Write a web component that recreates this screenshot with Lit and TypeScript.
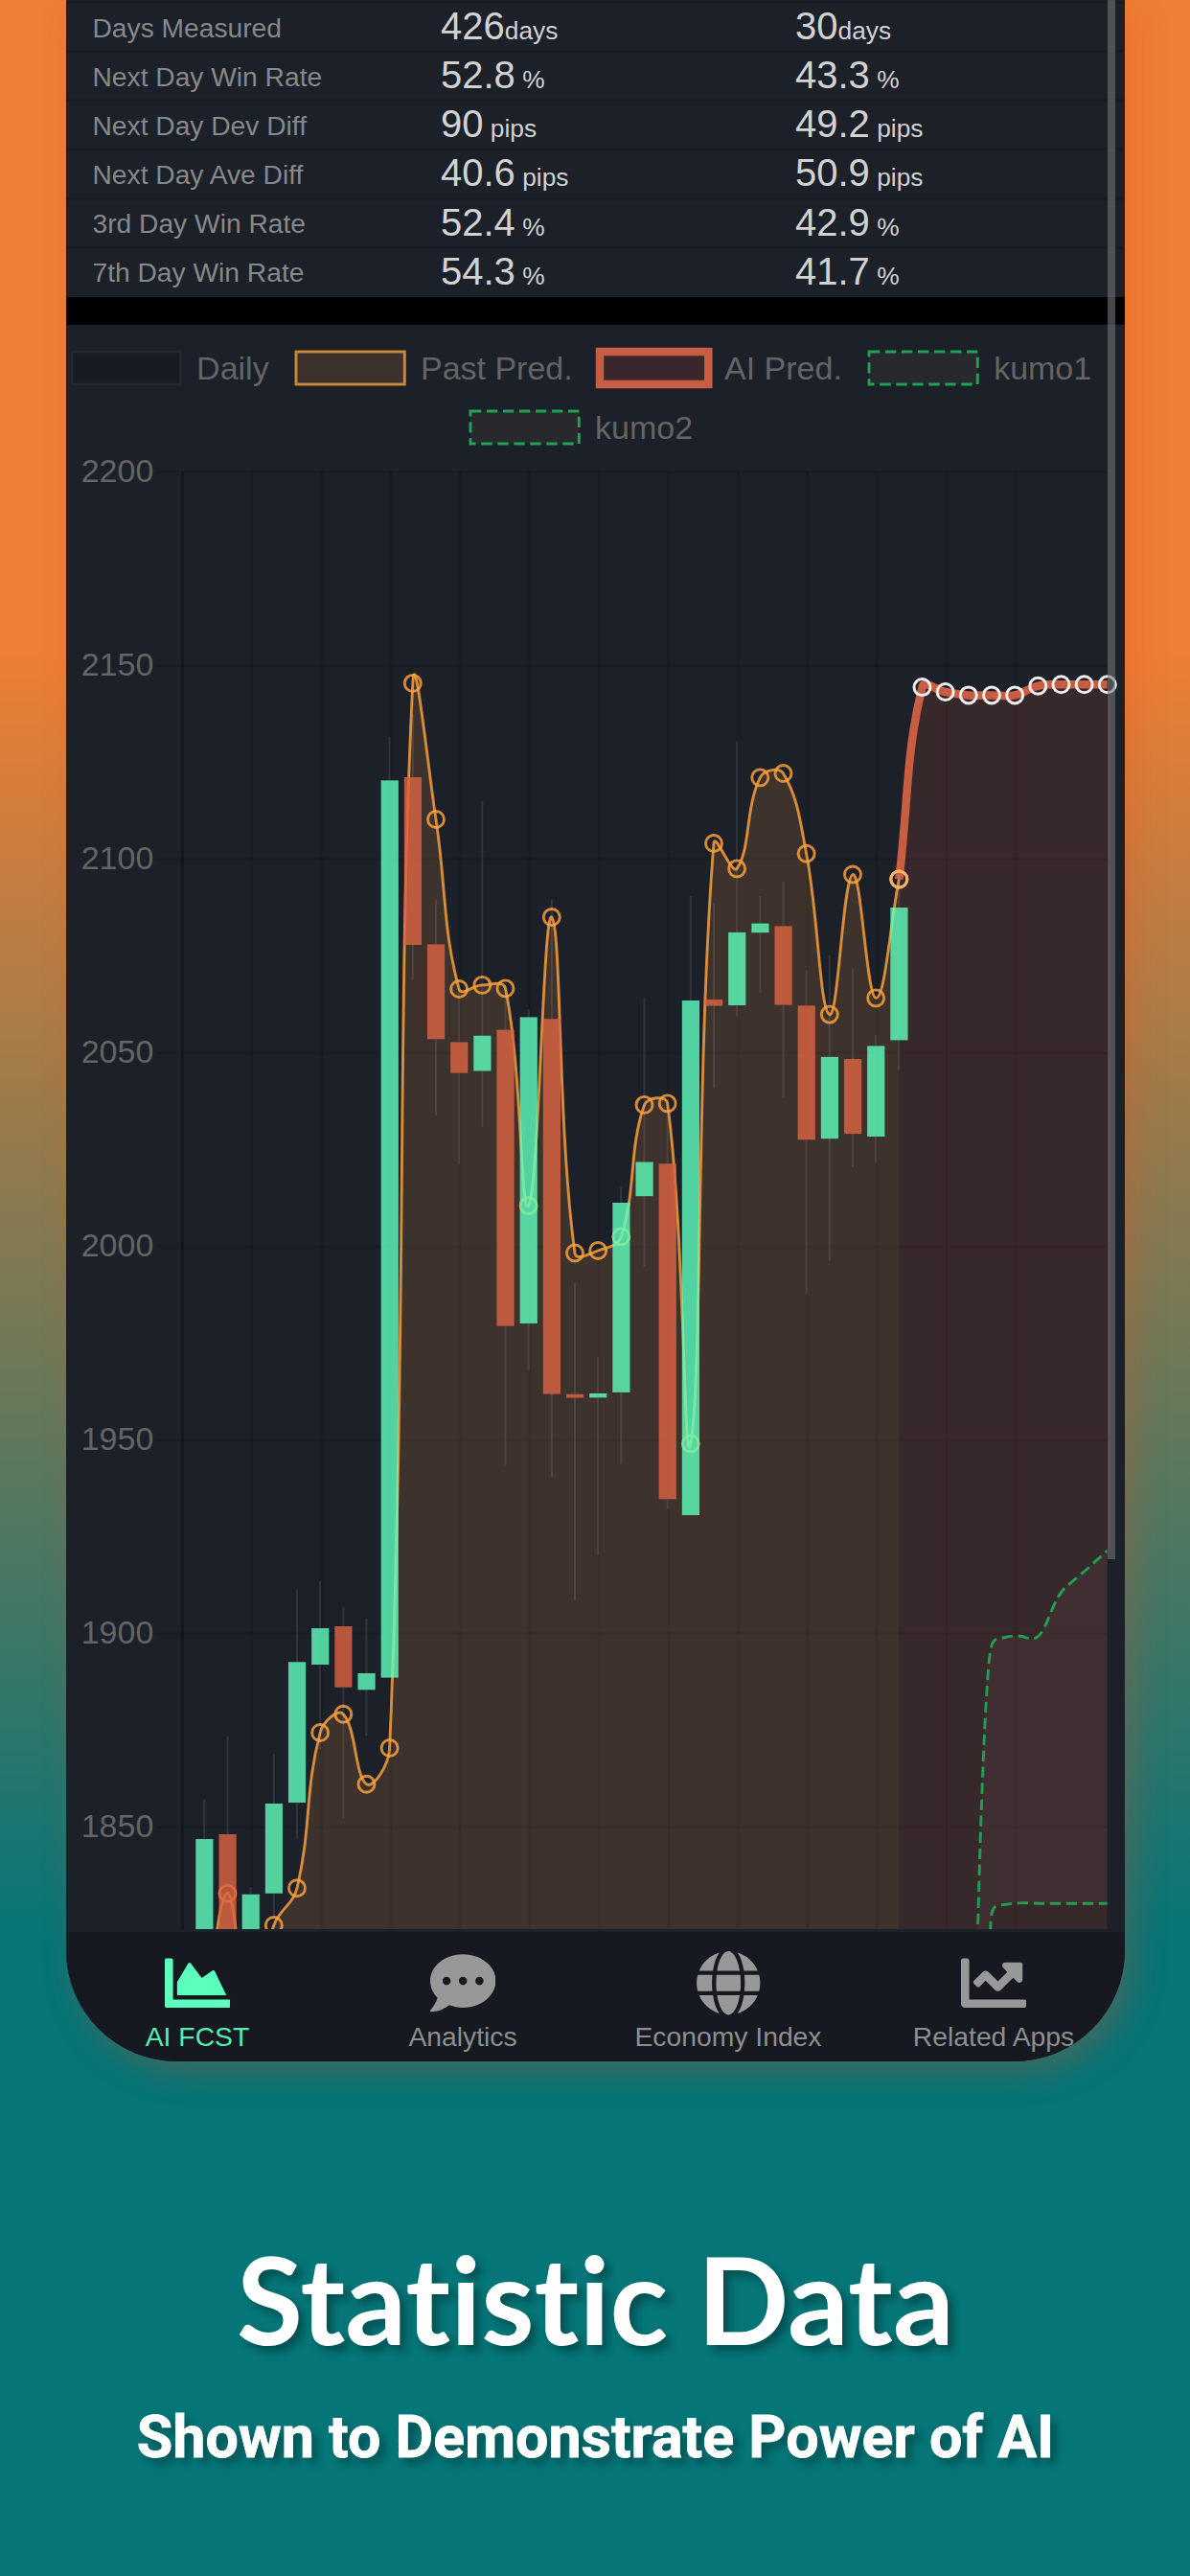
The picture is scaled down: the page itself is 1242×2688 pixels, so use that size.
import { LitElement, html, svg, css } from 'lit';
import { customElement, property, state } from 'lit/decorators.js';
import { classMap } from 'lit/directives/class-map.js';

interface Stat {
  label: string;
  total: [string, string];
  recent: [string, string];
}

const STATS: Stat[] = [
  { label: 'Days Measured', total: ['426', 'days'], recent: ['30', 'days'] },
  { label: 'Next Day Win Rate', total: ['52.8', ' %'], recent: ['43.3', ' %'] },
  { label: 'Next Day Dev Diff', total: ['90', ' pips'], recent: ['49.2', ' pips'] },
  { label: 'Next Day Ave Diff', total: ['40.6', ' pips'], recent: ['50.9', ' pips'] },
  { label: '3rd Day Win Rate', total: ['52.4', ' %'], recent: ['42.9', ' %'] },
  { label: '7th Day Win Rate', total: ['54.3', ' %'], recent: ['41.7', ' %'] },
];

@customElement('stats-table')
class StatsTable extends LitElement {
  static styles = css`
    :host {
      display: block;
      box-sizing: border-box;
      height: 310px;
      padding-top: 1px;
      background: #1c2028;
    }

    .row {
      display: grid;
      grid-template-columns: 363.5px 370px 1fr;
      align-items: center;
      box-sizing: border-box;
      height: 51.15px;
      padding-left: 27.5px;
      border-top: 3px solid #191c24;
    }

    .label {
      font-size: 28.2px;
      color: #87888a;
    }

    .value {
      padding-top: 1px;
      font-size: 40px;
      line-height: 44px;
      color: #d2d2d3;
      white-space: pre;
    }

    .unit {
      font-size: 26.3px;
    }
  `;

  render() {
    return STATS.map((s) => html`
      <div class="row">
        <span class="label">${s.label}</span>
        <span class="value">${s.total[0]}<span class="unit">${s.total[1]}</span></span>
        <span class="value">${s.recent[0]}<span class="unit">${s.recent[1]}</span></span>
      </div>
    `);
  }
}

const LEGEND = [
  [
    { name: 'Daily', kind: 'daily' },
    { name: 'Past Pred.', kind: 'past' },
    { name: 'AI Pred.', kind: 'ai' },
    { name: 'kumo1', kind: 'kumo' },
  ],
  [{ name: 'kumo2', kind: 'kumo' }],
];

@customElement('chart-legend')
class ChartLegend extends LitElement {
  static styles = css`
    :host {
      display: block;
      padding-top: 14px;
      padding-right: 29px;
    }

    .line {
      display: flex;
      justify-content: center;
      gap: 28px;
      height: 62.3px;
    }

    .item {
      display: flex;
      align-items: center;
      gap: 17px;
      font-size: 34px;
      color: #646465;
    }

    svg {
      display: block;
      overflow: visible;
    }

    .daily { fill: #181b23; stroke: #272a31; stroke-width: 2.4; }
    .past { fill: #3d312b; stroke: #c88a39; stroke-width: 2.9; }
    .ai { fill: #39282b; stroke: #c95d42; stroke-width: 8.5; }
    .kumo { fill: #27292f; stroke: #1fa355; stroke-width: 2.9; stroke-dasharray: 11.3 5.7; }
  `;

  render() {
    return LEGEND.map((line) => html`
      <div class="line">
        ${line.map((item) => html`
          <div class="item">
            <svg width="113.3" height="34"><rect class=${item.kind} width="113.3" height="34"/></svg>
            <span>${item.name}</span>
          </div>
        `)}
      </div>
    `);
  }
}

type Point = { x: number; y: number };

// [open/close top, open/close bottom, high, low, rising]
type Candle = [number, number, number, number, boolean];

const FIRST_X = 213.3;
const STEP = 24.167;
const BOTTOM = 2013.5;
const RIGHT = 1155.8;

const CANDLES: Candle[] = [
  [1919, 2060, 1877, 2080, true],
  [1914, 2060, 1811.7, 2080, false],
  [1976.7, 2060, 1969, 2080, true],
  [1882, 1975.7, 1830.7, 2000, true],
  [1734.3, 1881, 1659, 1919.3, true],
  [1699, 1737, 1650, 1825, true],
  [1697, 1760.7, 1677.3, 1897.3, false],
  [1746, 1763.3, 1688.7, 1811.3, true],
  [814.3, 1750.6, 769, 1750, true],
  [811, 986, 745, 1021.8, false],
  [985.4, 1084.3, 938.6, 1164.3, false],
  [1087.5, 1119.6, 1031, 1214.6, false],
  [1080.7, 1117.5, 835.7, 1175.7, true],
  [1074.6, 1383.6, 1028, 1528.6, false],
  [1061.4, 1381, 1053, 1429.3, true],
  [1063.2, 1454.6, 938.6, 1541.4, false],
  [1454.8, 1458.6, 1338.6, 1670, false],
  [1454, 1458.4, 1416, 1622.9, true],
  [1255, 1452.9, 1238.6, 1527.5, true],
  [1212.5, 1248.2, 1041.4, 1321.4, true],
  [1214.3, 1564.3, 1150, 1574, false],
  [1044, 1581, 935, 1581, true],
  [1042.9, 1049.6, 942, 1135.4, false],
  [972.9, 1049, 773.6, 1060.4, true],
  [963.6, 973.2, 935, 1035.7, true],
  [966.4, 1048.6, 920, 1145.7, false],
  [1049.3, 1189.3, 1012.5, 1350, false],
  [1102.9, 1188.2, 996.8, 1315.6, true],
  [1105, 1183.2, 1011, 1217.9, false],
  [1091.4, 1186, 1080, 1213.6, true],
  [947, 1085.4, 900, 1116.8, true],
];

const PAST = [
  2110, 1975.7, 2110, 2009, 1970.3, 1808, 1788.7, 1861.7, 1824, 712.9, 855,
  1032, 1027.9, 1031.4, 1258, 957, 1307.5, 1305, 1290.4, 1152.9, 1151.4,
  1506.4, 880, 906.4, 811.4, 807, 890.7, 1058.6, 912.5, 1041.4, 917.5,
];

const AI = [917.5, 717.1, 722, 725.4, 725.4, 725.4, 715.7, 714.3, 714.3, 714.3];

const KUMO1 = 'M1018 2110C1021 1990 1024.5 1850 1030 1763C1032 1735 1033 1713 1039 1711C1047 1709 1059 1705.5 1067 1707.5C1075 1710 1080 1713 1087 1703.5C1095 1692 1100 1667 1112 1656.5C1120 1649.5 1128 1643 1136 1636L1155.8 1618';
const KUMO2 = 'M1032 2050L1034 2006C1035 1992 1036 1989.5 1044 1988C1052 1987 1062 1985 1073 1985.8L1087 1986.3H1155.8';
const KUMO_FILL = `${KUMO1}V1986.3H1087L1073 1985.8C1062 1985 1052 1987 1044 1988C1036 1989.5 1035 1992 1034 2006L1032 2050Z`;

const yOf = (price: number) => 492.5 + (2200 - price) * 4.0405;
const xOf = (i: number) => FIRST_X + i * STEP;

// cubic spline through the points, control points weighted by segment length
function spline(points: Point[], tension = 0.4): string {
  const controls = points.map((p, i) => {
    const prev = points[i - 1] ?? p;
    const next = points[i + 1] ?? p;
    const d01 = Math.hypot(p.x - prev.x, p.y - prev.y);
    const d12 = Math.hypot(next.x - p.x, next.y - p.y);
    const fa = (tension * d01) / (d01 + d12);
    const fb = (tension * d12) / (d01 + d12);
    return {
      inX: p.x - fa * (next.x - prev.x),
      inY: p.y - fa * (next.y - prev.y),
      outX: p.x + fb * (next.x - prev.x),
      outY: p.y + fb * (next.y - prev.y),
    };
  });
  let d = `M${points[0].x} ${points[0].y}`;
  for (let i = 1; i < points.length; i++) {
    const a = controls[i - 1];
    const b = controls[i];
    d += `C${a.outX} ${a.outY} ${b.inX} ${b.inY} ${points[i].x} ${points[i].y}`;
  }
  return d;
}

@customElement('forecast-chart')
class ForecastChart extends LitElement {
  static styles = css`
    :host {
      display: block;
    }

    /* room above the top grid line for its label */
    svg {
      display: block;
      margin-top: -12px;
    }

    .grid { stroke: rgba(0, 0, 0, 0.12); stroke-width: 2.8; }
    .axis { stroke: rgba(0, 0, 0, 0.28); stroke-width: 2.8; }
    .tick { font-size: 34px; fill: #646465; text-anchor: end; }
    .wick { stroke: rgba(205, 205, 205, 0.12); stroke-width: 2; }
    .body { fill: rgba(218, 99, 66, 0.82); }
    .body.up { fill: rgba(95, 255, 190, 0.8); }
    .past-area { fill: rgba(255, 159, 64, 0.15); }
    .past { fill: none; stroke: rgba(255, 162, 60, 0.82); stroke-width: 2.9; }
    .ai-area { fill: rgba(218, 90, 66, 0.15); }
    .ai-line { fill: none; stroke: #c95d42; stroke-width: 8.5; }
    .ai-dot { fill: none; stroke: #f2eeee; stroke-width: 3; }
    .kumo-area { fill: rgba(255, 255, 255, 0.045); }
    .kumo { fill: none; stroke: #20a04f; stroke-width: 2.9; stroke-dasharray: 11.3 5.7; }
  `;

  render() {
    const past = PAST.map((y, i) => ({ x: xOf(i), y }));
    const ai = AI.map((y, i) => ({ x: xOf(i + 30), y }));
    const pastPath = spline(past);
    const aiPath = spline(ai);
    const prices = [2200, 2150, 2100, 2050, 2000, 1950, 1900, 1850];
    const columns = Array.from({ length: 13 }, (_, i) => 190.3 + i * 72.5);

    return html`
      <svg width="1105" height="1547.5" viewBox="69 466 1105 1547.5">
        <defs>
          <clipPath id="plot"><rect x="160" y="478" width=${RIGHT - 160} height="1535.5"/></clipPath>
        </defs>
        ${prices.map((p) => svg`
          <line class="grid" x1="163" x2=${RIGHT} y1=${yOf(p)} y2=${yOf(p)}/>
          <text class="tick" x="160.3" y=${yOf(p) + 10.7}>${p}</text>
        `)}
        ${columns.map((x, i) => svg`
          <line class=${i ? 'grid' : 'axis'} x1=${x} x2=${x} y1="492" y2=${BOTTOM}/>
        `)}
        <g clip-path="url(#plot)">
          <path class="kumo-area" d=${KUMO_FILL}/>
          <path class="ai-area" d="${aiPath}V2100H${xOf(30)}Z"/>
          <path class="past-area" d="${pastPath}V2200H${xOf(0)}Z"/>
          <path class="kumo" d=${KUMO2}/>
          <path class="kumo" d=${KUMO1}/>
          <path class="ai-line" d=${aiPath}/>
          <path class="past" d=${pastPath}/>
        </g>
        ${ai.map((p) => svg`<circle class="ai-dot" cx=${p.x} cy=${p.y} r="8.5"/>`)}
        ${past.map((p) => svg`<circle class="past" cx=${p.x} cy=${p.y} r="8.5"/>`)}
        ${CANDLES.map(([top, bottom, high, low, up], i) => svg`
          <line class="wick" x1=${xOf(i)} x2=${xOf(i)} y1=${high} y2=${top}/>
          <line class="wick" x1=${xOf(i)} x2=${xOf(i)} y1=${bottom} y2=${Math.max(low, bottom)}/>
          <rect class=${up ? 'body up' : 'body'} x=${xOf(i) - 9} y=${top} width="18.2" height=${bottom - top}/>
        `)}
      </svg>
    `;
  }
}

const TABS = [
  {
    name: 'AI FCST',
    box: '0 0 512 512',
    icon: 'M500 384c6.6 0 12 5.4 12 12v40c0 6.6-5.4 12-12 12H12c-6.6 0-12-5.4-12-12V76c0-6.6 5.4-12 12-12h40c6.6 0 12 5.4 12 12v308h436zM372.7 159.5L288 216l-85.3-113.700c-5.1-6.8-15.5-6.3-19.9 1L96 248v104h384l-89.9-187.800c-3.2-6.5-11.4-8.700-17.4-4.700z',
  },
  {
    name: 'Analytics',
    box: '0 0 512 512',
    icon: 'M256 32C114.6 32 0 125.1 0 240c0 49.6 21.4 95 57 130.7C44.5 421.1 2.7 466 2.2 466.5c-2.2 2.3-2.8 5.7-1.5 8.7S4.8 480 8 480c66.3 0 116-31.8 140.6-51.4 32.7 12.3 69 19.4 107.4 19.4 141.4 0 256-93.1 256-208S397.4 32 256 32zM128 272c-17.7 0-32-14.3-32-32s14.3-32 32-32 32 14.3 32 32-14.3 32-32 32zm128 0c-17.7 0-32-14.3-32-32s14.3-32 32-32 32 14.3 32 32-14.3 32-32 32zm128 0c-17.7 0-32-14.3-32-32s14.3-32 32-32 32 14.3 32 32-14.3 32-32 32z',
  },
  {
    name: 'Economy Index',
    box: '-8 0 512 512',
    icon: 'M336.5 160C322 70.7 287.8 8 248 8s-74 62.7-88.5 152h177zM152 256c0 22.2 1.2 43.5 3.3 64h185.3c2.1-20.5 3.3-41.8 3.3-64s-1.2-43.5-3.3-64H155.3c-2.1 20.5-3.3 41.8-3.3 64zm324.7-96c-28.6-67.9-86.5-120.4-158-141.6 24.4 33.8 41.2 84.7 50 141.6h108zM177.2 18.4C105.8 39.6 47.8 92.1 19.3 160h108c8.7-56.9 25.5-107.8 49.9-141.6zM487.4 192H372.7c2.1 21 3.3 42.5 3.3 64s-1.2 43-3.3 64h114.6c5.5-20.5 8.6-41.8 8.6-64s-3.1-43.5-8.5-64zM120 256c0-21.5 1.2-43 3.3-64H8.6C3.2 212.5 0 233.8 0 256s3.2 43.5 8.6 64h114.6c-2-21-3.2-42.5-3.2-64zm39.5 96c14.5 89.3 48.7 152 88.5 152s74-62.7 88.5-152h-177zm159.3 141.6c71.4-21.2 129.4-73.7 158-141.6h-108c-8.8 56.9-25.6 107.8-50 141.6zM19.3 352c28.6 67.9 86.5 120.4 158 141.6-24.4-33.8-41.2-84.7-50-141.6h-108z',
  },
  {
    name: 'Related Apps',
    box: '0 0 512 512',
    icon: 'M496 384H64V80c0-8.84-7.16-16-16-16H16C7.16 64 0 71.16 0 80v336c0 17.67 14.33 32 32 32h464c8.84 0 16-7.16 16-16v-32c0-8.84-7.16-16-16-16zM464 96H345.94c-21.38 0-32.09 25.85-16.97 40.97l32.4 32.4L288 242.75l-73.37-73.37c-12.5-12.5-32.76-12.5-45.25 0l-68.69 68.69c-6.25 6.25-6.25 16.38 0 22.63l22.62 22.62c6.25 6.25 16.38 6.25 22.63 0L192 237.25l73.37 73.37c12.5 12.5 32.76 12.5 45.25 0l96-96 32.4 32.4c15.12 15.12 40.97 4.41 40.97-16.97V112c.01-8.84-7.15-16-15.99-16z',
  },
];

@customElement('tab-bar')
class TabBar extends LitElement {
  @property({ type: Number }) selected = 0;

  static styles = css`
    :host {
      display: grid;
      grid-template-columns: repeat(4, 277px);
      justify-content: center;
      background: #171921;
    }

    .tab {
      display: flex;
      flex-direction: column;
      align-items: center;
      gap: 6px;
      padding-top: 19px;
      font-size: 28.3px;
      line-height: 32px;
      color: #989898;
      white-space: nowrap;
      cursor: pointer;
    }

    .tab.active {
      color: #5cffbc;
    }

    .name {
      opacity: 0.92;
    }

    svg {
      display: block;
      fill: currentColor;
    }
  `;

  render() {
    return TABS.map((tab, i) => html`
      <div class=${classMap({ tab: true, active: i === this.selected })}
           @click=${() => this.dispatchEvent(new CustomEvent('select-tab', { detail: i }))}>
        <svg width="68.5" height="68.5" viewBox=${tab.box}><path d=${tab.icon}/></svg>
        <span class="name">${tab.name}</span>
      </div>
    `);
  }
}

@customElement('app-root')
class AppRoot extends LitElement {
  @state() private tab = 0;

  static styles = css`
    :host {
      display: flex;
      flex-direction: column;
      align-items: center;
      box-sizing: border-box;
      height: 2688px;
      padding-left: 1px;
      overflow: hidden;
      font-family: "Liberation Sans", Arial, sans-serif;
      background: linear-gradient(#ed7e33 0, #ed7e33 680px, #057577 2030px);
    }

    .phone {
      position: relative;
      display: flex;
      flex-direction: column;
      box-sizing: border-box;
      width: 1105px;
      height: 2150.7px;
      flex: none;
      overflow: hidden;
      border-radius: 0 0 116px 116px;
      background: #1c2028;
      box-shadow: 10px 12px 34px rgba(240, 72, 30, 0.25);
    }

    .divider {
      height: 29px;
      flex: none;
      background: #000;
    }

    .chart {
      height: 1676.5px;
      flex: none;
    }

    tab-bar {
      flex: 1;
    }

    /* scroll indicator floating over the page */
    .scroll {
      position: absolute;
      top: 0;
      right: 9.8px;
      width: 8.4px;
      height: 1626.7px;
      background: rgba(115, 117, 118, 0.6);
    }

    h1, h2 {
      margin: 0;
      color: #fff;
      white-space: nowrap;
      text-shadow: 6px 6px 8px rgba(0, 0, 0, 0.32);
    }

    h1 {
      margin-top: 173px;
      font: 700 126px/150px Lato, sans-serif;
      font-variant-ligatures: none;
    }

    h2 {
      margin-top: 32px;
      font: 700 61px/74px Roboto, sans-serif;
      -webkit-text-stroke: 0.8px #fff;
    }
  `;

  render() {
    return html`
      <div class="phone">
        <stats-table></stats-table>
        <div class="divider"></div>
        <div class="chart">
          <chart-legend></chart-legend>
          <forecast-chart></forecast-chart>
        </div>
        <tab-bar .selected=${this.tab} @select-tab=${(e: CustomEvent) => (this.tab = e.detail)}></tab-bar>
        <div class="scroll"></div>
      </div>
      <h1>Statistic Data</h1>
      <h2>Shown to Demonstrate Power of AI</h2>
    `;
  }
}
